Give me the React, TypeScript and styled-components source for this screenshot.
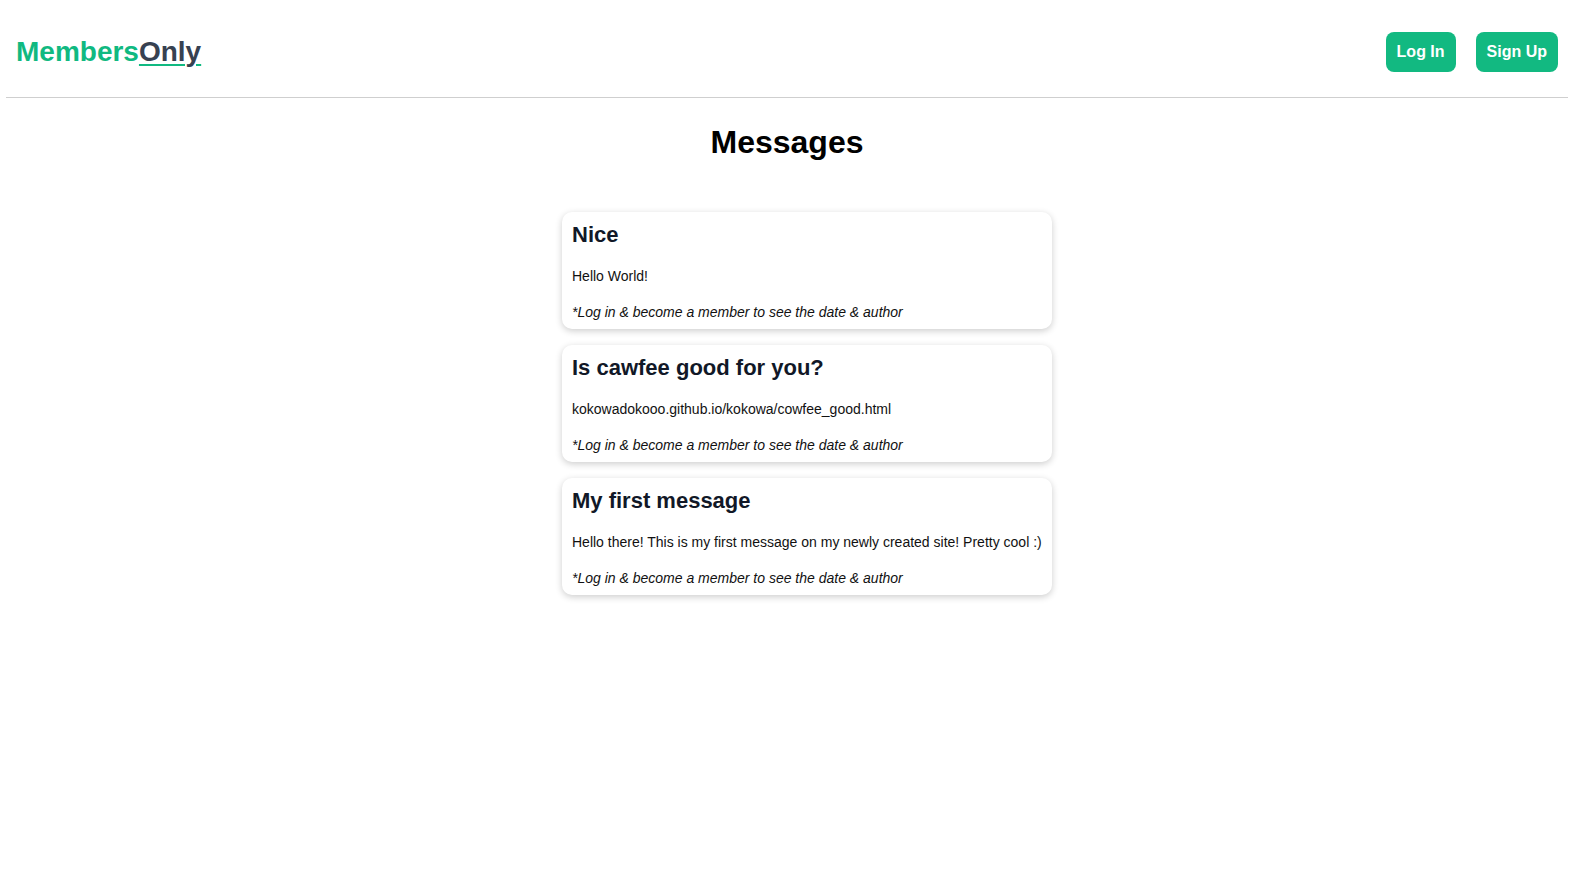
import React from "react";
import styled, { createGlobalStyle } from "styled-components";

const Global = createGlobalStyle`
  html, body { margin: 0; padding: 0; background: #fff; }
  body { font-family: "Liberation Sans", Arial, sans-serif; color: #000; }
  * { box-sizing: border-box; }
`;

const Header = styled.header`
  display: flex;
  align-items: center;
  justify-content: space-between;
  margin: 0 6px;
  padding: 6px 10px 0;
  height: 98px;
  border-bottom: 1px solid #cfcfcf;
`;

const Logo = styled.a`
  font-size: 28px;
  font-weight: 700;
  color: #10b981;
  text-decoration: none;
`;

const LogoAccent = styled.span`
  color: #374151;
  text-decoration: underline;
  text-decoration-color: #10b981;
  text-decoration-thickness: 2px;
  text-underline-offset: 3px;
`;

const Nav = styled.nav`
  display: flex;
  gap: 20px;
`;

const Button = styled.button`
  height: 40px;
  padding: 0 11px;
  border: none;
  border-radius: 8px;
  background: #12b981;
  color: #fff;
  font-family: "Liberation Sans", Arial, sans-serif;
  font-size: 16px;
  font-weight: 700;
  cursor: pointer;
`;

const Main = styled.main`
  display: flex;
  flex-direction: column;
  align-items: center;
  padding-bottom: 20px;
`;

const Title = styled.h1`
  margin: 26px 0 51px;
  font-size: 32px;
  font-weight: 700;
  color: #000;
`;

const List = styled.div`
  display: flex;
  flex-direction: column;
  align-items: center;
  gap: 16px;
  padding-left: 40px;
`;

const Card = styled.article`
  width: 490px;
  padding: 10px 10px 9px;
  background: #fff;
  border-radius: 10px;
  box-shadow: 0 2px 7px rgba(0, 0, 0, 0.2);
  display: flex;
  flex-direction: column;
  gap: 20px;
`;

const CardTitle = styled.h3`
  margin: 0;
  font-size: 22px;
  font-weight: 700;
  color: #111827;
`;

const CardBody = styled.p`
  margin: 0;
  font-size: 14px;
  color: #111;
`;

const CardMeta = styled.p`
  margin: 0;
  font-size: 14px;
  font-style: italic;
  color: #111;
`;

const messages = [
  { title: "Nice", body: "Hello World!" },
  { title: "Is cawfee good for you?", body: "kokowadokooo.github.io/kokowa/cowfee_good.html" },
  {
    title: "My first message",
    body: "Hello there! This is my first message on my newly created site! Pretty cool :)",
  },
];

export default function App() {
  return (
    <>
      <Global />
      <Header>
        <Logo href="#">
          Members<LogoAccent>Only</LogoAccent>
        </Logo>
        <Nav>
          <Button>Log In</Button>
          <Button>Sign Up</Button>
        </Nav>
      </Header>
      <Main>
        <Title>Messages</Title>
        <List>
          {messages.map((m) => (
            <Card key={m.title}>
              <CardTitle>{m.title}</CardTitle>
              <CardBody>{m.body}</CardBody>
              <CardMeta>*Log in &amp; become a member to see the date &amp; author</CardMeta>
            </Card>
          ))}
        </List>
      </Main>
    </>
  );
}
